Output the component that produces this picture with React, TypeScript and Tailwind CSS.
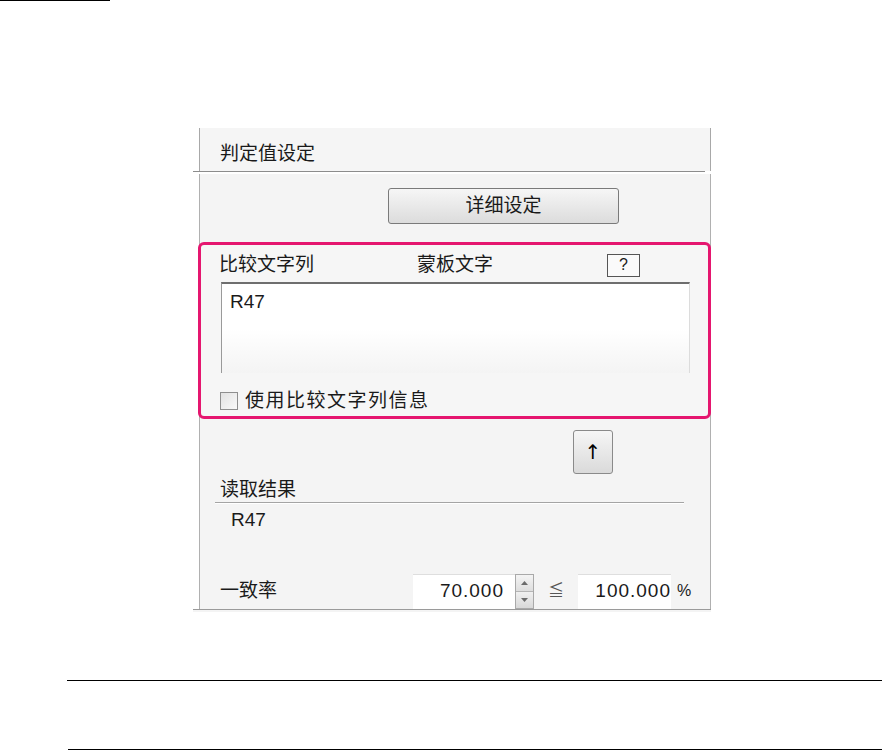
import React from "react";

const FONT = { fontFamily: '"Liberation Sans", "Noto Sans CJK SC", sans-serif' };

function Spinner() {
  return (
    <div className="flex h-[35px] w-[19px] flex-col border border-[#a9a9a9] bg-[#e9e9e9]">
      <div className="flex flex-1 items-center justify-center border-b border-[#b5b5b5] bg-gradient-to-b from-[#f4f4f4] to-[#dedede]">
        <svg width="7" height="4" viewBox="0 0 7 4">
          <path d="M0 4 L3.5 0 L7 4 Z" fill="#6b6b6b" />
        </svg>
      </div>
      <div className="flex flex-1 items-center justify-center bg-gradient-to-b from-[#f0f0f0] to-[#d8d8d8]">
        <svg width="7" height="4" viewBox="0 0 7 4">
          <path d="M0 0 L3.5 4 L7 0 Z" fill="#6b6b6b" />
        </svg>
      </div>
    </div>
  );
}

export default function App() {
  return (
    <div className="relative h-[750px] w-[882px] overflow-hidden bg-white text-[#1a1a1a]" style={FONT}>
      <div className="h-px w-[110px] bg-black" />

      {/* 判定值设定 パネル */}
      <div className="ml-[193px] mt-[127px] w-[519px]">
        <div className="ml-[6px] flex h-[43px] w-[512px] items-center border-x border-[#a8a8a8] bg-[#f5f5f5] pl-[20px] pt-[10px] text-[19px]">
          判定值设定
        </div>
        <div className="h-[3px] w-[512px] border-t border-[#8c8c8c] bg-white" />

        <div className="ml-[6px] w-[512px] border-x border-[#b0b0b0] bg-[#f4f4f4] pt-[14px]">
          <button className="ml-[188px] flex h-[36px] w-[231px] items-center justify-center rounded-[3px] border border-[#7a7a7a] bg-gradient-to-b from-[#f6f6f6] to-[#dcdcdc] text-[19px]">
            详细设定
          </button>

          <div className="-ml-[2px] mt-[18px] h-[177px] w-[513px] rounded-[6px] border-[3px] border-[#e5166f] bg-[#f6f6f6]">
            <div className="box-content flex h-[24px] items-center pl-[18px] pt-[8px] text-[19px]">
              <span className="w-[198px]">比较文字列</span>
              <span className="w-[190px]">蒙板文字</span>
              <span className="flex h-[23px] w-[33px] items-center justify-center border border-[#555] bg-[#fafafa] text-[16px]">
                ?
              </span>
            </div>
            <div className="ml-[20px] mt-[5px] h-[91px] w-[469px] border-l border-r border-t-2 border-l-[#9a9a9a] border-r-[#dcdcdc] border-t-[#6e6e6e] bg-gradient-to-b from-white via-white to-[#f4f4f4] pl-[8px] pt-[6px] text-[19px] leading-[24px]">
              R47
            </div>
            <div className="mt-[14px] flex items-center pl-[19px]">
              <span className="h-[18px] w-[18px] border border-[#8f8f8f] bg-gradient-to-br from-[#e2e2e2] to-[#fafafa]" />
              <span className="ml-[7px] text-[19px] tracking-[1.5px]">使用比较文字列信息</span>
            </div>
          </div>

          <button
            className="ml-[373px] mt-[11px] flex h-[44px] w-[40px] items-center justify-center rounded-[3px] border border-[#8a8a8a] bg-gradient-to-b from-[#f6f6f6] to-[#dadada] text-[20px] text-black"
            style={{ fontFamily: '"DejaVu Sans", sans-serif' }}
          >
            ↑
          </button>

          <div className="mt-[4px] flex h-[24px] items-center pl-[20px] text-[19px]">读取结果</div>
          <div className="ml-[15px] h-[2px] w-[469px] border-t border-[#a4a4a4] bg-white" />
          <div className="mt-[4px] flex h-[24px] items-center pl-[31px] text-[19px]">R47</div>

          <div className="mt-[41px] flex h-[36px] items-center pl-[20px] text-[19px]">
            <span className="w-[193px]">一致率</span>
            <div className="flex h-[35px] w-[102px] items-center justify-end border-t border-[#dedede] bg-white pr-[11px] tracking-[1px]">
              70.000
            </div>
            <Spinner />
            <span className="ml-[14px] w-[12px] text-[16px] text-[#555]">≦</span>
            <div className="ml-[18px] flex h-[35px] w-[93px] items-center justify-end border-t border-[#dedede] bg-white tracking-[1px]">
              100.000
            </div>
            <span className="ml-[6px] text-[16px]">%</span>
          </div>
        </div>
        <div className="h-[3px] w-[518px] border-t border-[#9a9a9a] bg-[#f4f4f4]" />
      </div>

      <div className="ml-[67px] mt-[68px] h-px w-[815px] bg-black" />
      <div className="ml-[68px] mt-[68px] h-px w-[814px] bg-black" />
    </div>
  );
}
